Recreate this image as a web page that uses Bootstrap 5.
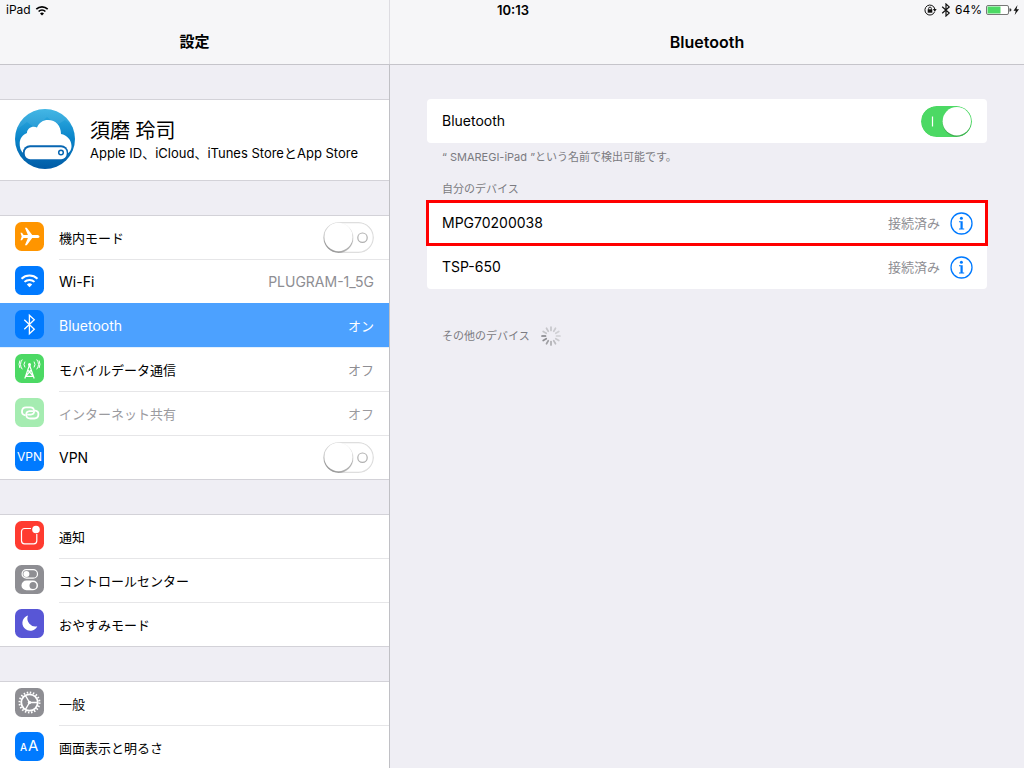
<!DOCTYPE html>
<html lang="ja">
<head>
<meta charset="utf-8">
<meta name="viewport" content="width=device-width, initial-scale=1">
<title>設定 - Bluetooth</title>
<link href="https://cdn.jsdelivr.net/npm/bootstrap@5.3.0/dist/css/bootstrap.min.css" rel="stylesheet">
<style>
:root { --ground:#efeef4; --line:#d3d2d8; --hair:#e6e6e8; --muted:#8e8e93; --blue:#007aff; }
body { font-family:Inter,"Noto Sans CJK JP",sans-serif; font-size:13px; line-height:20px; color:#000; background:var(--ground); }
.shell { height:100vh; }
.topbar, .panes { display:grid; grid-template-columns:390px minmax(0,1fr); }
.topbar { background:#f6f6f8; border-bottom:1px solid #c5c4ca; }
.topbar h1, .topbar h2 { grid-row:1; font-size:16px; line-height:20px; font-weight:600; margin:0; padding:32px 0 12px; text-align:center; }
.topbar h1 { grid-column:1; font-size:15px; font-weight:700; border-right:1px solid #dddce1; }
.topbar h2 { grid-column:2; }
.statusbar { grid-row:1; grid-column:1 / -1; height:20px; padding:0 4px 0 6px; font-size:12px; z-index:1; }
.clock { font-size:13px; font-weight:600; }
.panes { min-height:0; flex:1; }
.pane { overflow-y:auto; scrollbar-width:none; }
.side { border-right:1px solid #c0c0c5; padding:34px 0; }
.detail { padding:34px 37px; }
.group { background:#fff; border:solid var(--line); border-width:1px 0; margin-bottom:34px; border-radius:0; }
.setting { display:flex; align-items:stretch; padding-left:15px; color:#000; text-decoration:none; }
.setting > svg { flex:none; margin:6px 15px 0 0; }
.setting-body, .form-switch.setting-body { flex:1; display:flex; align-items:center; justify-content:space-between; height:44px; padding:0 15px 0 0; border-bottom:1px solid var(--hair); }
.setting:last-child .setting-body { height:43px; border-bottom:0; }
.setting.current { background:#4ca1ff; color:#fff; box-shadow:0 -1px 0 #4ca1ff; position:relative; border-bottom:1px solid #e3f0fd; }
.setting.current .setting-body { height:43px; border-bottom:0; }
.latin { font-size:14px; }
.value { color:var(--muted); }
.current .value { color:#fff; }
.dimmed, .dimmed .value { color:#9b9b9f; }
.profile { display:flex; align-items:center; height:80px; padding-left:15px; gap:15px; color:#000; text-decoration:none; }
.profile svg { align-self:flex-start; margin-top:9px; }
.profile-text { padding-top:2px; }
.profile-name { font-size:20px; line-height:24px; }
.form-switch .form-check-input.toggle { width:51px; height:31px; margin:0; border:0; border-radius:16px; background-color:transparent; background-position:center; background-size:51px 31px; box-shadow:none;
  background-image:url("data:image/svg+xml,%3Csvg xmlns='http://www.w3.org/2000/svg' viewBox='0 0 51 31'%3E%3Crect x='.7' y='.7' width='49.6' height='29.6' rx='14.8' fill='%23fff' stroke='%23dedede' stroke-width='1.3'/%3E%3Cg fill='%23000' fill-opacity='.12'%3E%3Ccircle cx='15.5' cy='16.5' r='14.5'/%3E%3Ccircle cx='15.5' cy='16' r='15'/%3E%3Ccircle cx='15.5' cy='16' r='14.5'/%3E%3C/g%3E%3Ccircle cx='15.5' cy='15' r='14.2' fill='%23fff'/%3E%3Ccircle cx='39.500' cy='15.7' r='4.7' fill='none' stroke='%23b0b0b0' stroke-width='1.2'/%3E%3C/svg%3E"); }
.form-switch .form-check-input.toggle:checked { background-position:center;
  background-image:url("data:image/svg+xml,%3Csvg xmlns='http://www.w3.org/2000/svg' viewBox='0 0 51 31'%3E%3Crect width='51' height='31' rx='15.5' fill='%234cd964'/%3E%3Cpath d='M11.5 10.5v10' stroke='%23fff' stroke-width='1.2'/%3E%3Ccircle cx='35.8' cy='16.5' r='14.2' fill='%233fae50'/%3E%3Ccircle cx='35.8' cy='15.3' r='14.2' fill='%23fff'/%3E%3C/svg%3E"); }
.box { background:#fff; border-radius:4px; }
.device, .device.form-switch { display:flex; align-items:center; height:44px; padding:0 15px; }
.box + .box, .box .device { padding-right:14px; }
.device.marked { outline:3px solid #f00; outline-offset:-2px; background:#fff; position:relative; }
.info { border:0; background:none; padding:0; margin-left:10px; display:flex; color:var(--blue); }
.note { font-size:11px; line-height:16px; color:#7b7b81; padding-left:15px; margin:0; font-weight:400; }
.hint { padding-top:6px; }
.searching { margin-top:36px; gap:10px; }
</style>
</head>
<body>
<div class="shell d-flex flex-column">
  <header class="topbar">
    <div class="statusbar d-flex align-items-center">
      <div class="d-flex align-items-center gap-1 col">
        <span>iPad</span>
        <svg width="14" height="11" viewBox="0 0 14 11" fill="none" stroke="#000" stroke-width="1.6"><path d="M1.3 4.2a8.2 8.2 0 0 1 11.4 0M3.6 6.5a4.9 4.9 0 0 1 6.8 0"/><path d="M7 10.4 5 8.4a2.8 2.8 0 0 1 4 0z" fill="#000" stroke="none"/></svg>
      </div>
      <div class="clock">10:13</div>
      <div class="d-flex align-items-center justify-content-end col">
        <svg class="me-1" width="13" height="12" viewBox="0 0 13 12" fill="none" stroke="#111"><path d="M10.6 7.8A5 5 0 1 1 10.8 5"/><path d="M8.9 5h3.8l-1.9 2.7z" fill="#111" stroke="none"/><path d="M4.6 5.7V4.5a1.4 1.4 0 0 1 2.8 0v1.2" stroke-width=".9"/><path d="M3.7 5.3h4.6v3.4H3.7z" fill="#111" stroke="none"/></svg>
        <svg class="me-1" width="10" height="14" viewBox="0 0 10 14" fill="none" stroke="#111" stroke-width="1.2"><path d="m1.2 3.8 7 6.3L5 13V1l3.2 2.9-7 6.3"/></svg>
        <span>64%</span>
        <svg class="ms-1" width="34" height="12" viewBox="0 0 34 12"><rect x=".5" y="1.5" width="22" height="9" rx="1.5" fill="#fff" stroke="#777"/><path d="M1.5 2.5h13v7h-13z" fill="#4cd964"/><path d="M23.5 4.3q2 .3 2 1.7t-2 1.7z" fill="#333"/><path d="m31.5 1-4 5.8h2.3L28.7 11 33 5.2h-2.5z" fill="#111"/></svg>
      </div>
    </div>
    <h1>設定</h1>
    <h2>Bluetooth</h2>
  </header>

  <div class="panes">
    <nav class="pane side" aria-label="設定">
      <div class="group">
        <a class="profile" href="#account">
          <svg width="60" height="60" viewBox="0 0 60 60">
            <defs><linearGradient id="sky" x2="0" y2="1"><stop stop-color="#33b1e3"/><stop offset=".5" stop-color="#0a84c9"/><stop offset="1" stop-color="#005aa5"/></linearGradient><clipPath id="disc"><circle cx="30" cy="30" r="30"/></clipPath></defs>
            <g clip-path="url(#disc)"><path d="M0 0h60v60H0z" fill="url(#sky)"/><path d="m0 22 12-9 8 6 12-11 10 8 8-5 10 8V0H0z" fill="#fff" opacity=".08"/></g>
            <path d="M9 45C5.500 42 4.500 38 4.700 34 5 29 8 25.500 12 24c0-4.500 5-7.500 10-5.500C24 13.500 28 11 33 11c8 0 13 6 13 14 6 1 10.500 6 10.500 12 0 4-2 7-5.500 8z" fill="#fff"/>
            <rect x="8" y="36.200" width="45" height="15" rx="7" fill="#0766b2"/>
            <rect x="9.700" y="38.200" width="42" height="12" rx="5.500" fill="#fff"/>
            <circle cx="46" cy="43.500" r="2.300" fill="#fff" stroke="#0766b2" stroke-width="1.500"/>
          </svg>
          <div class="profile-text"><div class="profile-name">須磨 玲司</div><div>Apple ID、iCloud、iTunes StoreとApp Store</div></div>
        </a>
      </div>

      <div class="group">
        <div class="setting">
          <svg width="29" height="29" viewBox="0 0 29 29"><rect width="29" height="29" rx="6.500" fill="#ff9500"/><path d="M24.500 14.500c0-1-1.200-1.600-2.500-1.600h-4.800L11.800 5.800h-1.900l3 7.100H8.600L7 10.800H5.500l1.200 3.700-1.200 3.700H7l1.600-2.100h4.300l-3 7.100h1.900l5.400-7.100H22c1.300 0 2.500-.6 2.500-1.600z" fill="#fff"/></svg>
          <div class="setting-body form-switch"><label for="air">機内モード</label><input class="form-check-input toggle" type="checkbox" role="switch" id="air"></div>
        </div>
        <a class="setting" href="#wifi">
          <svg width="29" height="29" viewBox="0 0 29 29"><rect width="29" height="29" rx="6.500" fill="#007aff"/><g fill="none" stroke="#fff" stroke-width="2"><path d="M6.500 12.700a11.600 11.600 0 0 1 16 0M9.500 15.900a7.200 7.200 0 0 1 10 0"/></g><path d="m14.500 21.300-2.700-2.800a4 4 0 0 1 5.400 0z" fill="#fff"/></svg>
          <div class="setting-body latin"><span>Wi-Fi</span><span class="value">PLUGRAM-1_5G</span></div>
        </a>
        <a class="setting current" href="#bluetooth" aria-current="page">
          <svg width="29" height="29" viewBox="0 0 29 29"><rect width="29" height="29" rx="6.500" fill="#007aff"/><path d="m9.300 9.700 10 9.500-4.900 4.600V5.200l4.900 4.600-10 9.500" fill="none" stroke="#fff" stroke-width="1.300"/></svg>
          <div class="setting-body"><span class="latin">Bluetooth</span><span class="value">オン</span></div>
        </a>
        <a class="setting" href="#mobile">
          <svg width="29" height="29" viewBox="0 0 29 29"><rect width="29" height="29" rx="6.500" fill="#4cd964"/><g fill="none" stroke="#fff" stroke-width="1.200"><path d="m14.500 11-4.700 13.500M14.500 11l4.700 13.500M12.800 16l5.500 6.300M16.200 16l-5.500 6.300M12.500 17h4M10.500 22.300h8"/><path d="M10 7.600a5 5 0 0 0 0 5.800M19 7.600a5 5 0 0 1 0 5.800M7.300 5.500a7.600 7.600 0 0 0 0 9.800M21.700 5.500a7.600 7.600 0 0 1 0 9.800M4.900 6.500a9 9 0 0 0 0 7.500M24.100 6.500a9 9 0 0 1 0 7.500" stroke-width="1"/></g><circle cx="14.500" cy="10.500" r="1.500" fill="#fff"/></svg>
          <div class="setting-body"><span>モバイルデータ通信</span><span class="value">オフ</span></div>
        </a>
        <a class="setting dimmed" href="#tethering">
          <svg width="29" height="29" viewBox="0 0 29 29"><rect width="29" height="29" rx="6.500" fill="#a5ecb1"/><g fill="none" stroke="#fff" stroke-width="1.800" stroke-linecap="round"><path d="M9.800 17.200C5.600 16.200 6.200 9.300 11 9.300h4.200c5 0 5.200 7 .6 7.300H13"/><path d="M20.600 12.600c4.200 1 3.600 7.900-1.200 7.900h-4.200c-5 0-5.200-7-.6-7.300h2.800"/></g></svg>
          <div class="setting-body"><span>インターネット共有</span><span class="value">オフ</span></div>
        </a>
        <div class="setting">
          <svg width="29" height="29" viewBox="0 0 29 29"><rect width="29" height="29" rx="6.500" fill="#007aff"/><text x="14.500" y="19" text-anchor="middle" font-size="12" fill="#fff">VPN</text></svg>
          <div class="setting-body form-switch"><label class="latin" for="vpn">VPN</label><input class="form-check-input toggle" type="checkbox" role="switch" id="vpn"></div>
        </div>
      </div>

      <div class="group">
        <a class="setting" href="#notifications">
          <svg width="29" height="29" viewBox="0 0 29 29"><rect width="29" height="29" rx="6.500" fill="#ff3b30"/><path d="M16 7.500H9.500a3 3 0 0 0-3 3v9.300a3 3 0 0 0 3 3h9.300a3 3 0 0 0 3-3V13" fill="none" stroke="#fff" stroke-width="1.200"/><circle cx="21" cy="8.500" r="3.800" fill="#fff"/></svg>
          <div class="setting-body">通知</div>
        </a>
        <a class="setting" href="#control">
          <svg width="29" height="29" viewBox="0 0 29 29"><rect width="29" height="29" rx="6.500" fill="#8e8e93"/><rect x="7.100" y="4.600" width="15.400" height="8.600" rx="4.300" fill="none" stroke="#fff" stroke-width="1.200"/><circle cx="11.400" cy="8.900" r="3" fill="#fff"/><rect x="6.500" y="15.500" width="16.500" height="9.800" rx="4.900" fill="#fff"/><circle cx="18" cy="20.400" r="3.500" fill="#8e8e93"/></svg>
          <div class="setting-body">コントロールセンター</div>
        </a>
        <a class="setting" href="#dnd">
          <svg width="29" height="29" viewBox="0 0 29 29"><rect width="29" height="29" rx="6.500" fill="#5856d6"/><path d="M13 6.500a7.800 7.800 0 1 0 9.300 10.700A8 8 0 0 1 13 6.500z" fill="#fff"/></svg>
          <div class="setting-body">おやすみモード</div>
        </a>
      </div>

      <div class="group">
        <a class="setting" href="#general">
          <svg width="29" height="29" viewBox="0 0 29 29"><rect width="29" height="29" rx="6.500" fill="#8e8e93"/><g fill="none" stroke="#fff"><circle cx="14.500" cy="14.500" r="10" stroke-width="2" stroke-dasharray="1.500 1.642"/><circle cx="14.500" cy="14.500" r="8.200" stroke-width="1.800"/><path d="M14.500 14.500h8M14.500 14.500l-4-6.900M14.500 14.500l-4 6.900" stroke-width="1.300"/></g><circle cx="14.500" cy="14.500" r="1.700" fill="#fff"/></svg>
          <div class="setting-body">一般</div>
        </a>
        <a class="setting" href="#display">
          <svg width="29" height="29" viewBox="0 0 29 29"><rect width="29" height="29" rx="6.500" fill="#007aff"/><text x="5" y="19" font-size="10" font-weight="500" fill="#fff">A</text><text x="13" y="19" font-size="15" fill="#fff">A</text></svg>
          <div class="setting-body">画面表示と明るさ</div>
        </a>
      </div>
    </nav>

    <main class="pane detail">
      <div class="box device form-switch justify-content-between">
        <label class="latin" for="bt">Bluetooth</label>
        <input class="form-check-input toggle" type="checkbox" role="switch" id="bt" checked>
      </div>
      <p class="note hint">“ SMAREGI-iPad ”という名前で検出可能です。</p>
      <h3 class="note pt-3 pb-1">自分のデバイス</h3>
      <div class="box p-0">
        <div class="device marked"><span class="latin me-auto">MPG70200038</span><span class="value">接続済み</span>
          <button class="info" type="button" aria-label="MPG70200038 の情報"><svg width="23" height="23" viewBox="0 0 23 23"><circle cx="11.500" cy="11.500" r="10.500" fill="none" stroke="currentColor" stroke-width="1.300"/><circle cx="11.400" cy="6.300" r="1.500" fill="currentColor"/><path d="M9 9.200h3.700v7.300h1.500v1.100H9v-1.100h1.500v-6.200H9z" fill="currentColor"/></svg></button>
        </div>
        <div class="device"><span class="latin me-auto">TSP-650</span><span class="value">接続済み</span>
          <button class="info" type="button" aria-label="TSP-650 の情報"><svg width="23" height="23" viewBox="0 0 23 23"><circle cx="11.500" cy="11.500" r="10.500" fill="none" stroke="currentColor" stroke-width="1.300"/><circle cx="11.400" cy="6.300" r="1.500" fill="currentColor"/><path d="M9 9.200h3.700v7.300h1.500v1.100H9v-1.100h1.500v-6.200H9z" fill="currentColor"/></svg></button>
        </div>
      </div>
      <div class="searching d-flex align-items-center">
        <h3 class="note">その他のデバイス</h3>
        <svg width="22" height="22" viewBox="-11 -11 22 22" stroke-width="1.700" stroke-linecap="round" role="img" aria-label="検索中">
          <path d="M0-5.500V-9" stroke="#c6c6ca"/><path d="M0-5.500V-9" stroke="#cbcbcf" transform="rotate(30)"/><path d="M0-5.500V-9" stroke="#d0d0d4" transform="rotate(60)"/><path d="M0-5.500V-9" stroke="#d0d0d4" transform="rotate(90)"/><path d="M0-5.500V-9" stroke="#cacace" transform="rotate(120)"/><path d="M0-5.500V-9" stroke="#bcbcc0" transform="rotate(150)"/><path d="M0-5.500V-9" stroke="#aeaeb2" transform="rotate(180)"/><path d="M0-5.500V-9" stroke="#a0a0a4" transform="rotate(210)"/><path d="M0-5.500V-9" stroke="#8d8d91" transform="rotate(240)"/><path d="M0-5.500V-9" stroke="#7d7d82" transform="rotate(270)"/><path d="M0-5.500V-9" stroke="#c4c4c8" transform="rotate(300)"/><path d="M0-5.500V-9" stroke="#c6c6ca" transform="rotate(330)"/>
        </svg>
      </div>
    </main>
  </div>
</div>
<script src="https://cdn.jsdelivr.net/npm/bootstrap@5.3.0/dist/js/bootstrap.bundle.min.js"></script>
</body>
</html>
